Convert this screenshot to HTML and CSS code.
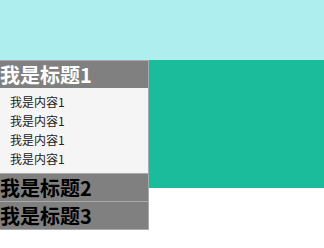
FILE: index.html
```html
<!DOCTYPE html>
<html>
<head>
    <meta charset="UTF-8">
    <title>Accordion</title>
    <link rel="stylesheet" href="styles.css">
</head>
<body>
    <div class="top"></div>
    <div class="main">
        <div class="nav">
            <div class="nav-title active">我是标题1</div>
            <ul class="nav-list">
                <li>我是内容1</li>
                <li>我是内容1</li>
                <li>我是内容1</li>
                <li>我是内容1</li>
            </ul>
            <div class="nav-title">我是标题2</div>
            <div class="nav-title">我是标题3</div>
        </div>
        <div class="content"></div>
    </div>
</body>
</html>
```

FILE: styles.css
```css
* {
    box-sizing: border-box;
    margin: 0;
    padding: 0;
}

body {
    font-family: "Noto Sans CJK SC", "Liberation Sans", sans-serif;
    background-color: #fff;
}

.top {
    height: 60px;
    background-color: #afeeee;
}

.main {
    display: flex;
    align-items: flex-start;
}

.nav {
    width: 149px;
    border-right: 1px solid #aaa;
    border-bottom: 1px solid #aaa;
}

.nav-title {
    height: 28px;
    line-height: 27px;
    border-top: 1px solid #aaa;
    background-color: #808080;
    color: #000;
    font-size: 20px;
    font-weight: bold;
}

.nav-title.active {
    color: #fff;
}

.nav-list {
    list-style: none;
    background-color: #f5f5f5;
    padding: 4px 0 5px;
}

.nav-list li {
    height: 19px;
    line-height: 19px;
    padding-left: 10px;
    font-size: 12px;
    color: #222;
}

.content {
    flex: 1;
    height: 128px;
    background-color: #1abc9c;
}
```
